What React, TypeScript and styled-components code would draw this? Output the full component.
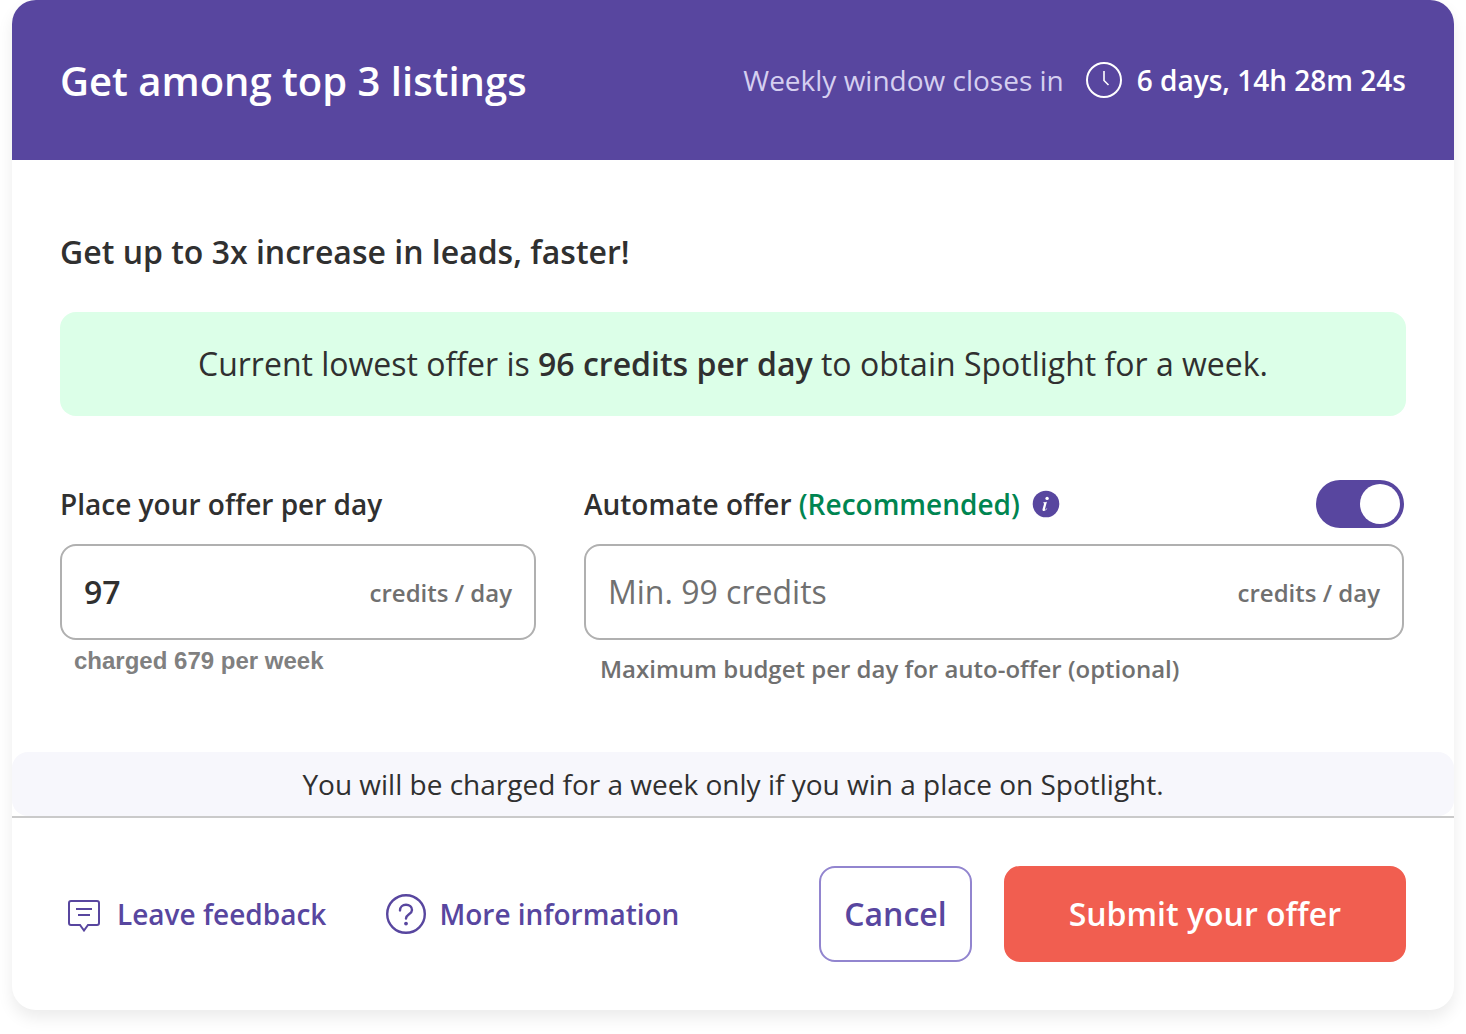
import React, { useState } from "react";
import styled, { createGlobalStyle } from "styled-components";

const color = {
  purple: "#58469f",
  lilac: "#9285cf",
  coral: "#f15e50",
  green: "#008551",
  mint: "#dcffe8",
  mist: "#f7f7fc",
  ink: "#303030",
  grey: "#707070",
  border: "#b0b0b0",
  rule: "#cacaca",
};

const GlobalStyle = createGlobalStyle`
  *, *::before, *::after { box-sizing: border-box; }
  body {
    margin: 0;
    background: #fff;
    color: ${color.ink};
    font-family: "Open Sans", "Noto Sans", sans-serif;
  }
  h1, h2, p { margin: 0; }
`;

const Page = styled.main`
  padding: 0 12px 24px;
`;

const Card = styled.form`
  border-radius: 24px;
  background: #fff;
  box-shadow: 0 8px 16px rgba(0, 0, 0, 0.08);
`;

const Header = styled.header`
  display: flex;
  align-items: center;
  justify-content: space-between;
  gap: 24px;
  min-height: 160px;
  padding: 24px 48px;
  border-radius: 24px 24px 0 0;
  background: ${color.purple};
  color: #fff;
`;

const Title = styled.h1`
  padding-top: 2px;
  font-size: 40px;
  font-weight: 600;
  line-height: 56px;
`;

const Countdown = styled.p`
  display: flex;
  align-items: center;
  font-size: 28px;
  line-height: 40px;
`;

const CountdownLabel = styled.span`
  margin-right: 22px;
  color: #d5cff0;
`;

const TimeLeft = styled.span`
  margin-left: 15px;
  font-weight: 600;
`;

const Icon = styled.svg`
  display: block;
  flex: none;
`;

const Body = styled.div`
  padding: 68px 48px 66px;
`;

const Heading = styled.h2`
  font-size: 32px;
  font-weight: 600;
  line-height: 48px;
`;

const Banner = styled.p`
  margin-top: 36px;
  padding: 28px 24px;
  border-radius: 16px;
  background: ${color.mint};
  font-size: 32px;
  line-height: 48px;
  text-align: center;

  strong {
    font-weight: 600;
  }
`;

const Fields = styled.div`
  display: grid;
  grid-template-columns: minmax(0, 476fr) minmax(0, 820fr);
  gap: 48px;
  margin-top: 64px;
  padding-right: 2px;
`;

const LabelRow = styled.div`
  display: flex;
  align-items: center;
  height: 48px;
  margin-bottom: 16px;
`;

const Label = styled.label`
  font-size: 28px;
  font-weight: 600;
  line-height: 40px;
`;

const Recommended = styled.span`
  color: ${color.green};
`;

const IconButton = styled.button`
  margin-left: 12px;
  padding: 0;
  border: 0;
  background: none;
  cursor: pointer;
`;

const Toggle = styled.input`
  appearance: none;
  display: flex;
  flex: none;
  justify-content: flex-start;
  width: 88px;
  height: 48px;
  margin: 0 0 0 auto;
  padding: 4px;
  border-radius: 24px;
  background: ${color.border};
  cursor: pointer;

  &::before {
    content: "";
    width: 40px;
    height: 40px;
    border-radius: 50%;
    background: #fff;
  }

  &:checked {
    justify-content: flex-end;
    background: ${color.purple};
  }
`;

const InputBox = styled.div`
  display: flex;
  align-items: center;
  height: 96px;
  padding: 0 22px;
  border: 2px solid ${color.border};
  border-radius: 16px;

  &:focus-within {
    border-color: ${color.purple};
  }
`;

const Input = styled.input`
  flex: 1;
  min-width: 0;
  padding: 0;
  border: 0;
  outline: 0;
  background: none;
  color: ${color.ink};
  font: 600 32px/48px "Open Sans", "Noto Sans", sans-serif;

  &::placeholder {
    color: ${color.grey};
    font-weight: 400;
    opacity: 1;
  }
`;

const Unit = styled.span`
  padding-top: 2px;
  color: ${color.grey};
  font-size: 24px;
  font-weight: 600;
  line-height: 32px;
`;

const Hint = styled.p`
  padding: 13px 16px 1px;
  color: ${color.grey};
  font-size: 24px;
  font-weight: 600;
  line-height: 32px;
`;

const Charge = styled.p`
  padding: 5px 14px 0;
  color: #808080;
  font-family: "Liberation Sans", Arial, sans-serif;
  font-size: 24px;
  font-weight: 700;
  line-height: 32px;
`;

const Note = styled.p`
  padding: 12px 24px;
  border-radius: 16px;
  background: ${color.mist};
  font-size: 28px;
  line-height: 40px;
  text-align: center;
`;

const Footer = styled.footer`
  display: flex;
  align-items: center;
  justify-content: space-between;
  gap: 24px;
  padding: 48px;
  border-top: 2px solid ${color.rule};
`;

const Links = styled.nav`
  display: flex;
  gap: 60px;
  padding-left: 8px;
`;

const FooterLink = styled.a`
  display: flex;
  align-items: center;
  gap: 13px;
  color: ${color.purple};
  font-size: 28px;
  font-weight: 600;
  line-height: 40px;
  text-decoration: none;
`;

const Actions = styled.div`
  display: flex;
  gap: 32px;
`;

const Button = styled.button<{ $primary?: boolean }>`
  height: 96px;
  padding: 0 ${(p) => (p.$primary ? 63 : 23)}px;
  border: 2px solid ${(p) => (p.$primary ? color.coral : color.lilac)};
  border-radius: 16px;
  background: ${(p) => (p.$primary ? color.coral : "#fff")};
  color: ${(p) => (p.$primary ? "#fff" : color.purple)};
  font: 600 32px/48px "Open Sans", "Noto Sans", sans-serif;
  cursor: pointer;
`;

const ClockIcon = () => (
  <Icon width="36" height="36" viewBox="0 0 36 36" fill="none" stroke="#fff" aria-hidden="true">
    <circle cx="18" cy="18" r="17" strokeWidth="2" />
    <path d="M18 9v9.5l4.5 4.5" strokeWidth="1.6" />
  </Icon>
);

const InfoIcon = () => (
  <Icon width="28" height="28" viewBox="0 0 28 28" aria-hidden="true">
    <circle cx="14" cy="14" r="13.3" fill={color.purple} />
    <circle cx="15.1" cy="8.4" r="1.7" fill="#fff" />
    <path
      d="M11.2 12.4c1.5-.1 2.4-.4 3.7-.7l-1.9 7.2c-.2.8.2.9.7.5.4-.3.8-.8 1.1-1.2l.5.4c-1.1 1.6-2.2 2.5-3.5 2.5-1.1 0-1.5-.8-1.2-2l1.4-5c.2-.8 0-1-.9-1.1z"
      fill="#fff"
    />
  </Icon>
);

const FeedbackIcon = () => (
  <Icon width="36" height="36" viewBox="0 0 36 36" fill="none" stroke={color.purple} strokeWidth="2" aria-hidden="true">
    <path d="M3 5h26a2 2 0 0 1 2 2v20a2 2 0 0 1-2 2H20L16 34.5 12 29H3a2 2 0 0 1-2-2V7a2 2 0 0 1 2-2z" />
    <path d="M8 13h16M10 19h12" />
  </Icon>
);

const HelpIcon = () => (
  <Icon width="40" height="40" viewBox="0 0 40 40" fill="none" stroke={color.purple} aria-hidden="true">
    <circle cx="20" cy="20" r="18.8" strokeWidth="2.4" />
    <path
      d="M14 16.4c0-3.4 2.6-5.6 6-5.6s6 2.2 6 5.1c0 4.4-6 4.3-6 8.6"
      strokeWidth="2.4"
      strokeLinecap="round"
    />
    <circle cx="20" cy="29.6" r="1.9" fill={color.purple} stroke="none" />
  </Icon>
);

export default function App() {
  const [offer, setOffer] = useState("97");
  const [budget, setBudget] = useState("");
  const [automate, setAutomate] = useState(true);

  return (
    <>
      <GlobalStyle />
      <Page>
        <Card onSubmit={(e) => e.preventDefault()}>
          <Header>
            <Title>Get among top 3 listings</Title>
            <Countdown>
              <CountdownLabel>Weekly window closes in</CountdownLabel>
              <ClockIcon />
              <TimeLeft>6 days, 14h 28m 24s</TimeLeft>
            </Countdown>
          </Header>

          <Body>
            <Heading>Get up to 3x increase in leads, faster!</Heading>
            <Banner>
              Current lowest offer is <strong>96 credits per day</strong> to obtain Spotlight for a week.
            </Banner>

            <Fields>
              <div>
                <LabelRow>
                  <Label htmlFor="offer">Place your offer per day</Label>
                </LabelRow>
                <InputBox>
                  <Input id="offer" inputMode="numeric" value={offer} onChange={(e) => setOffer(e.target.value)} />
                  <Unit>credits / day</Unit>
                </InputBox>
                <Charge>charged {Number(offer) * 7 || 0} per week</Charge>
              </div>

              <div>
                <LabelRow>
                  <Label htmlFor="budget">
                    Automate offer <Recommended>(Recommended)</Recommended>
                  </Label>
                  <IconButton type="button" aria-label="About automated offers">
                    <InfoIcon />
                  </IconButton>
                  <Toggle
                    type="checkbox"
                    role="switch"
                    aria-label="Automate offer"
                    checked={automate}
                    onChange={(e) => setAutomate(e.target.checked)}
                  />
                </LabelRow>
                <InputBox>
                  <Input
                    id="budget"
                    inputMode="numeric"
                    placeholder="Min. 99 credits"
                    value={budget}
                    disabled={!automate}
                    onChange={(e) => setBudget(e.target.value)}
                  />
                  <Unit>credits / day</Unit>
                </InputBox>
                <Hint>Maximum budget per day for auto-offer (optional)</Hint>
              </div>
            </Fields>
          </Body>

          <Note>You will be charged for a week only if you win a place on Spotlight.</Note>

          <Footer>
            <Links>
              <FooterLink href="#feedback">
                <FeedbackIcon />
                Leave feedback
              </FooterLink>
              <FooterLink href="#more">
                <HelpIcon />
                More information
              </FooterLink>
            </Links>
            <Actions>
              <Button type="button">Cancel</Button>
              <Button type="submit" $primary>
                Submit your offer
              </Button>
            </Actions>
          </Footer>
        </Card>
      </Page>
    </>
  );
}
